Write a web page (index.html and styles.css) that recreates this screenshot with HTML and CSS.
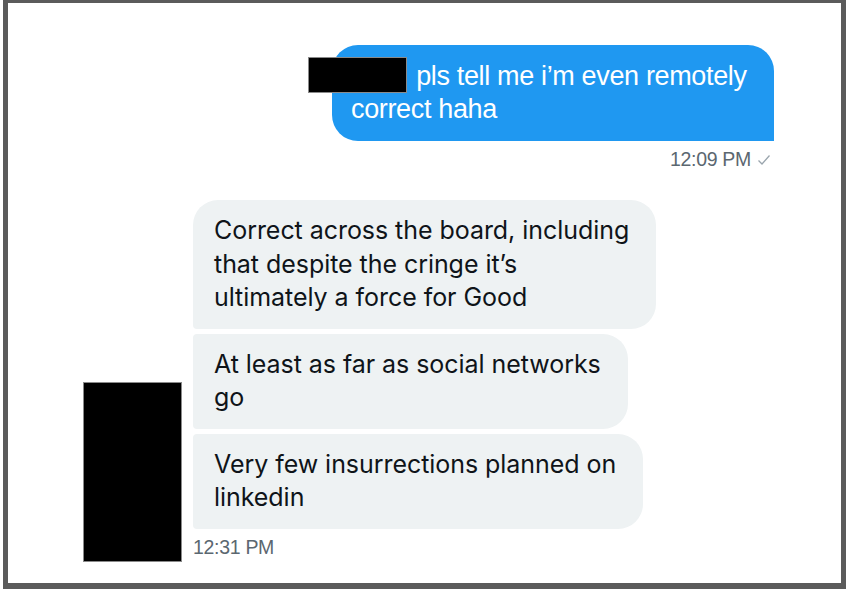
FILE: index.html
```html
<html>
<head>
<title>Messages</title>
<link rel="stylesheet" href="styles.css">
</head>
<body>
<div id="frame">

  <div class="sentGroup">
    <div class="bubble sent">
      <span class="nameGap"></span> pls tell me i’m even remotely correct haha
      <span class="redact sentRedact"></span>
    </div>
    <div class="meta sentMeta">12:09 PM
      <svg class="tick" width="14" height="12" viewBox="0 0 14 12"><polyline points="1.5,6.5 5,10 12.5,1.5" fill="none" stroke="#9aa5ad" stroke-width="1.3"/></svg>
    </div>
  </div>

  <div class="receivedGroup">
    <div class="avatar redact"></div>
    <div class="column">
      <div class="bubble received first">Correct across the board, including<br>that despite the cringe it’s<br>ultimately a force for Good</div>
      <div class="bubble received">At least as far as social networks<br>go</div>
      <div class="bubble received">Very few insurrections planned on<br>linkedin</div>
      <div class="meta recvMeta">12:31 PM</div>
    </div>
  </div>

</div>
</body>
</html>
```

FILE: styles.css
```css
body{
    margin: 0;
    background: #ffffff;
}
#frame{
    margin-left: 3px;
    width: 843px;
    height: 589px;
    box-sizing: border-box;
    border: 5px solid #5b5b5b;
    border-top-width: 3px;
    border-bottom-width: 6px;
    padding: 42px 67px 0 0;
    display: flex;
    flex-direction: column;
}
.sentGroup{
    display: flex;
    flex-direction: column;
    align-items: flex-end;
}
.bubble{
    box-sizing: border-box;
}
.sent{
    position: relative;
    width: 442px;
    height: 96px;
    padding: 15px 20px 15px 19px;
    background: #1f98f1;
    color: #ffffff;
    font-family: "Liberation Sans", Arial, sans-serif;
    font-size: 27px;
    letter-spacing: -0.35px;
    line-height: 33px;
    border-radius: 26px 26px 0 26px;
}
.nameGap{
    display: inline-block;
    width: 58px;
}
.redact{
    background: #000000;
    border: 1px solid #8a8a8a;
    box-sizing: border-box;
}
.sentRedact{
    position: absolute;
    left: -24px;
    top: 12px;
    width: 99px;
    height: 36px;
}
.meta{
    font-family: "Liberation Sans", Arial, sans-serif;
    font-size: 19.5px;
    line-height: 20px;
    color: #5b6770;
    letter-spacing: -0.3px;
}
.sentMeta{
    margin-top: 8px;
    margin-right: 3px;
    display: flex;
    align-items: center;
    gap: 6px;
}
.tick{
    margin-top: 1px;
}
.receivedGroup{
    margin-top: 31px;
    display: flex;
    align-items: flex-end;
    gap: 11px;
}
.avatar{
    margin-left: 75px;
    width: 99px;
    height: 180px;
}
.column{
    display: flex;
    flex-direction: column;
    align-items: flex-start;
    gap: 5px;
}
.received{
    padding: 14px 27px 14px 21px;
    background: #eef2f3;
    color: #0f1419;
    font-family: Inter, "Noto Sans", sans-serif;
    font-size: 25px;
    letter-spacing: -0.05px;
    line-height: 33.5px;
    border-radius: 4px 25px 25px 4px;
}
.first{
    border-top-left-radius: 25px;
}
.recvMeta{
    margin-top: 3px;
    padding-bottom: 5px;
}
```
